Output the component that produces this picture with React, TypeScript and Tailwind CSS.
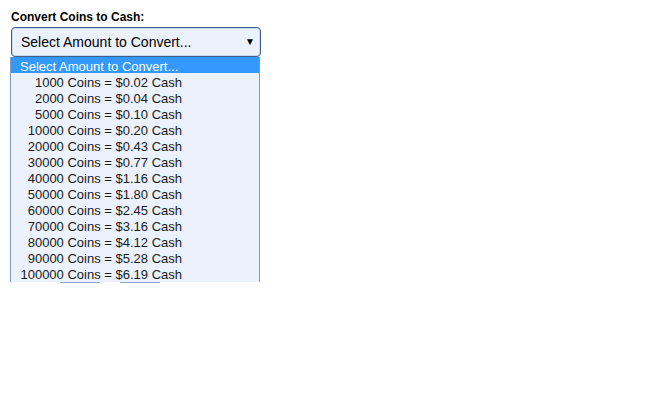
import React from "react";

const options = [
  "1000 Coins = $0.02 Cash",
  "2000 Coins = $0.04 Cash",
  "5000 Coins = $0.10 Cash",
  "10000 Coins = $0.20 Cash",
  "20000 Coins = $0.43 Cash",
  "30000 Coins = $0.77 Cash",
  "40000 Coins = $1.16 Cash",
  "50000 Coins = $1.80 Cash",
  "60000 Coins = $2.45 Cash",
  "70000 Coins = $3.16 Cash",
  "80000 Coins = $4.12 Cash",
  "90000 Coins = $5.28 Cash",
  "100000 Coins = $6.19 Cash",
];

export default function App() {
  return (
    <div
      className="w-[662px] h-[405px] bg-white text-black"
      style={{ fontFamily: '"Liberation Sans", Arial, sans-serif' }}
    >
      <div className="pt-[10px] pl-[11px]">
        <div className="text-[12px] font-bold leading-[14px] h-[17px]">Convert Coins to Cash:</div>
        <div className="w-[250px] h-[30px] rounded-[4px] border border-[#3f5f8f] bg-[#ecf2fd] flex items-center justify-between pl-[9px] pr-[5px] shadow-[inset_0_0_0_1px_#c9d9f3]">
          <span className="text-[14px] leading-[16px]">Select Amount to Convert...</span>
          <span className="text-[10px] leading-none">▼</span>
        </div>
      </div>
      <div className="ml-[10px] w-[250px] h-[225px] border-l border-r border-[#7c9ac2] bg-[#ebf2fd] text-[13px] leading-[19px]">
        <div className="h-[16px] bg-[#3399ff] text-white pl-[9px]">Select Amount to Convert...</div>
        {options.map((o) => (
          <div key={o} className="h-[16px] flex text-[#1a1a1a]">
            <div className="w-[171px] text-right">{o}</div>
          </div>
        ))}
      </div>
      <div className="flex ml-[60px] h-[2px]">
        <div className="w-[40px] h-[1px] bg-[#8aa4c8]" />
        <div className="w-[20px]" />
        <div className="w-[40px] h-[1px] bg-[#8aa4c8]" />
      </div>
    </div>
  );
}
